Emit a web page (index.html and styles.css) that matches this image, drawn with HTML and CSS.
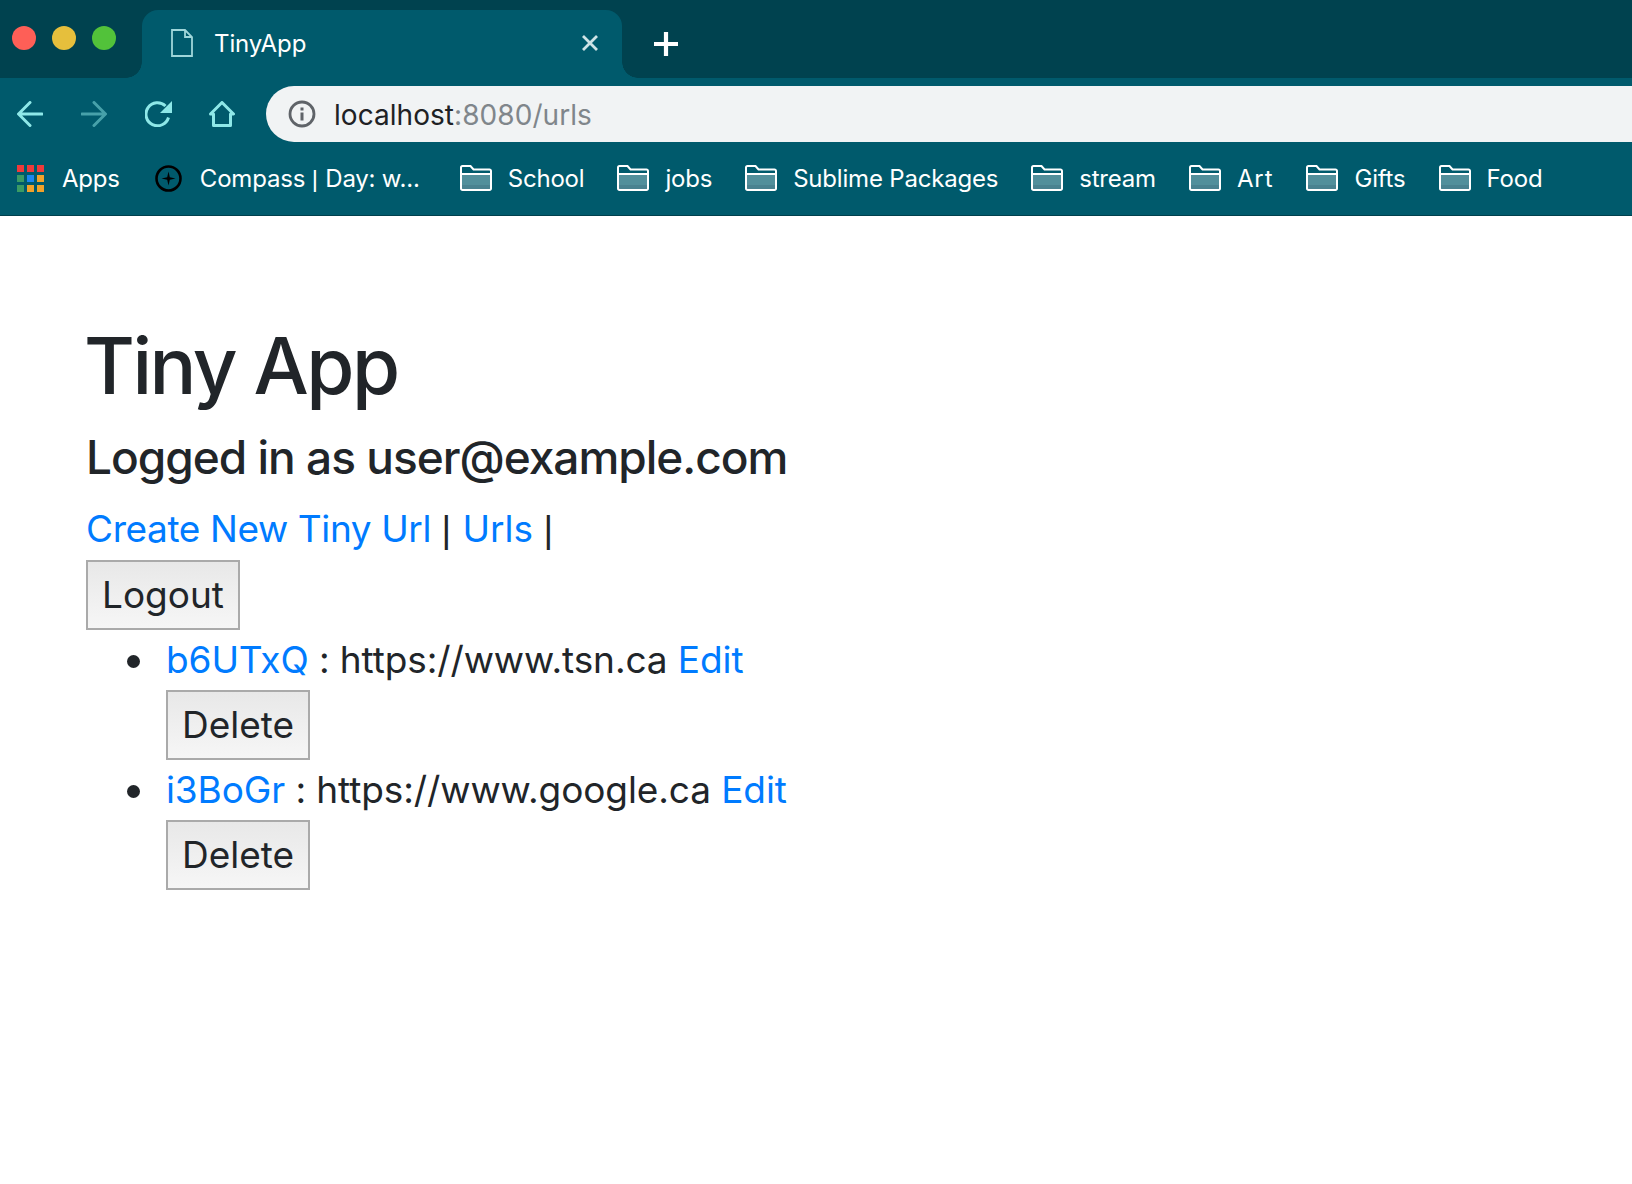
FILE: index.html
```html
<!DOCTYPE html>
<html lang="en">
<head>
  <meta charset="UTF-8">
  <title>TinyApp</title>
  <link rel="stylesheet" href="styles.css">
</head>
<body>
  <svg class="defs" width="0" height="0">
    <symbol id="folder" viewBox="0 0 32 26">
      <path d="M1 9h30v14.5a1.5 1.5 0 0 1-1.5 1.5h-27A1.5 1.5 0 0 1 1 23.5z" fill="#528f9b"/>
      <path d="M1 20h30v3.500a1.500 1.500 0 0 1-1.500 1.500h-27A1.500 1.500 0 0 1 1 23.500z" fill="#4a8290"/>
      <path d="M1 9V2.500A1.500 1.500 0 0 1 2.500 1h8l3 3.500h16A1.500 1.500 0 0 1 31 6v17.500a1.500 1.500 0 0 1-1.500 1.500h-27A1.500 1.500 0 0 1 1 23.500V9h30" fill="none" stroke="#fff" stroke-width="2"/>
    </symbol>
  </svg>

  <header class="browser">
    <div class="tabstrip">
      <div class="lights">
        <span class="light red"></span>
        <span class="light yellow"></span>
        <span class="light green"></span>
      </div>
      <div class="tab">
        <svg class="tab-icon" width="22" height="28" viewBox="0 0 22 28"><path d="M1 1h13l7 7v19H1zM14 1v7h7" fill="none" stroke="#9fd6da" stroke-width="1.800"/></svg>
        <span class="tab-title">TinyApp</span>
        <svg class="tab-close" width="18" height="18" viewBox="0 0 18 18"><path d="M2 2l14 14M16 2L2 16" stroke="#cfe3e6" stroke-width="2.800"/></svg>
      </div>
      <svg class="new-tab" width="26" height="26" viewBox="0 0 26 26"><path d="M13 1v24M1 13h24" stroke="#fff" stroke-width="4.200"/></svg>
    </div>

    <div class="toolbar">
      <svg class="nav-icon" width="26" height="26" viewBox="0 0 26 26"><path d="M25 13H2M13 1.500L1.500 13 13 24.500" fill="none" stroke="#8ee8e8" stroke-width="3" stroke-linecap="round"/></svg>
      <svg class="nav-icon dim" width="26" height="26" viewBox="0 0 26 26"><path d="M1 13h23M13 1.500L24.500 13 13 24.500" fill="none" stroke="#8ee8e8" stroke-width="3" stroke-linecap="round"/></svg>
      <svg class="nav-icon reload" width="27" height="26" viewBox="0 0 27 26"><path d="M23.500 16.500A11.500 11.500 0 1 1 20.500 5" fill="none" stroke="#8ee8e8" stroke-width="3"/><path d="M27 0v12H15z" fill="#8ee8e8"/></svg>
      <svg class="nav-icon" width="26" height="26" viewBox="0 0 26 26"><path d="M1.500 13L13 1.500 24.500 13h-3v11.500h-17V13z" fill="none" stroke="#8ee8e8" stroke-width="3" stroke-linejoin="round"/></svg>
      <div class="omnibox">
        <svg class="info" width="28" height="28" viewBox="0 0 28 28"><circle cx="14" cy="14" r="12" fill="none" stroke="#5f6368" stroke-width="2.800"/><path d="M14 12.500v8M14 7.500v3" stroke="#5f6368" stroke-width="3"/></svg>
        <span class="url">localhost<span class="url-rest">:8080/urls</span></span>
      </div>
    </div>

    <nav class="bookmarks">
      <a class="bookmark apps">
        <span class="apps-grid">
          <i class="r"></i><i class="r"></i><i class="r"></i>
          <i class="g"></i><i class="b"></i><i class="o"></i>
          <i class="g"></i><i class="o"></i><i class="o"></i>
        </span>
        Apps
      </a>
      <a class="bookmark compass">
        <svg width="27" height="27" viewBox="0 0 27 27"><circle cx="13.500" cy="13.500" r="12" fill="none" stroke="#000" stroke-width="2.600"/><path d="M13.500 6.500l1.300 5.700 5.700 1.300-5.700 1.300-1.300 5.700-1.300-5.700-5.700-1.300 5.700-1.300z" fill="#000"/></svg>
        <span>Compass <span class="sep">|</span> Day: w...</span>
      </a>
      <a class="bookmark"><svg class="folder"><use href="#folder"/></svg>School</a>
      <a class="bookmark"><svg class="folder"><use href="#folder"/></svg>jobs</a>
      <a class="bookmark"><svg class="folder"><use href="#folder"/></svg>Sublime Packages</a>
      <a class="bookmark"><svg class="folder"><use href="#folder"/></svg>stream</a>
      <a class="bookmark wide"><svg class="folder"><use href="#folder"/></svg>Art</a>
      <a class="bookmark"><svg class="folder"><use href="#folder"/></svg>Gifts</a>
      <a class="bookmark"><svg class="folder"><use href="#folder"/></svg>Food</a>
    </nav>
  </header>

  <main class="page">
    <h1>Tiny App</h1>
    <h4>Logged in as user@example.com</h4>
    <div class="links">
      <a class="create" href="#">Create New Tiny Url</a> <span class="sep">|</span> <a href="#">Urls</a> <span class="sep">|</span>
    </div>
    <form class="inline-form"><button type="button">Logout</button></form>
    <ul class="url-list">
      <li>
        <a href="#">b6UTxQ</a> : https://www.tsn.ca <a href="#">Edit</a>
        <form class="inline-form"><button type="button">Delete</button></form>
      </li>
      <li>
        <a href="#">i3BoGr</a> : https://www.google.ca <a href="#">Edit</a>
        <form class="inline-form"><button type="button">Delete</button></form>
      </li>
    </ul>
  </main>
</body>
</html>
```

FILE: styles.css
```css
body {
  margin: 0;
  font-family: Inter, "Liberation Sans", sans-serif;
  color: #212529;
  background: #fff;
}

.defs {
  position: absolute;
}

/* Browser chrome */
.browser {
  background: #005a6c;
  color: #fff;
  border-bottom: 1px solid #00404d;
}

.tabstrip {
  display: flex;
  align-items: flex-end;
  height: 78px;
  background: #00424f;
}

.lights {
  display: flex;
  gap: 16px;
  width: 142px;
  height: 68px;
  padding: 16px 0 0 12px;
  box-sizing: border-box;
}

.light {
  width: 24px;
  height: 24px;
  border-radius: 50%;
}
.red { background: #fe5f57; }
.yellow { background: #e6bf3c; }
.green { background: #52c23a; }

.tab {
  position: relative;
  display: flex;
  align-items: center;
  width: 480px;
  height: 68px;
  box-sizing: border-box;
  padding: 0 23px 2px 29px;
  background: #005a6c;
  border-radius: 16px 16px 0 0;
}

/* flared bottom corners of the tab */
.tab::before,
.tab::after {
  content: "";
  position: absolute;
  bottom: 0;
  width: 16px;
  height: 16px;
}
.tab::before {
  left: -16px;
  background: radial-gradient(circle at 0 0, #00424f 15.500px, #005a6c 16px);
}
.tab::after {
  right: -16px;
  background: radial-gradient(circle at 100% 0, #00424f 15.500px, #005a6c 16px);
}

.tab-title {
  flex: 1;
  margin-left: 21px;
  font-size: 24px;
  letter-spacing: -0.1px;
}

.new-tab {
  margin: 0 0 21px 31px;
}

.toolbar {
  display: flex;
  align-items: center;
  height: 72px;
  padding: 0 0 0 17px;
}

.nav-icon {
  flex: none;
  margin-right: 38px;
}
.reload {
  margin-right: 37px;
}
.dim { opacity: 0.5; }

.omnibox {
  flex: 1;
  display: flex;
  align-items: center;
  height: 56px;
  margin-left: -7px;
  padding-left: 22px;
  background: #f1f3f4;
  border-radius: 28px 0 0 28px;
}

.url {
  margin: 1px 0 0 18px;
  font-size: 28px;
  letter-spacing: 0.05px;
  color: #202124;
}
.url-rest { color: #80868b; }

.bookmarks {
  display: flex;
  align-items: center;
  gap: 33px;
  height: 65px;
  padding: 0 0 9px 17px;
  box-sizing: border-box;
  font-size: 24px;
  letter-spacing: -0.2px;
}

.bookmark {
  display: flex;
  align-items: center;
  gap: 16px;
  white-space: nowrap;
  color: #fff;
}

.wide {
  letter-spacing: 0.9px;
}

.folder {
  width: 32px;
  height: 26px;
}

.compass {
  gap: 18px;
  margin: 0 7px 0 2px;
}
.apps {
  gap: 18px;
}

.apps-grid {
  display: grid;
  grid-template-columns: repeat(3, 7px);
  gap: 3px;
}
.apps-grid i {
  height: 7px;
}
.apps-grid .r { background: #f03a3a; }
.apps-grid .g { background: #3a9b64; }
.apps-grid .b { background: #1a86f0; }
.apps-grid .o { background: #f2a22a; }

/* Page content */
.page {
  padding: 100px 86px 0;
  font-size: 37px;
  line-height: 60px;
}

h1 {
  margin: 0 0 11px -2px;
  font-size: 78px;
  font-weight: 500;
  line-height: 100px;
  letter-spacing: -2.500px;
}

h4 {
  margin: 0 0 12px;
  font-size: 46px;
  font-weight: 500;
  line-height: 60px;
  letter-spacing: -1px;
}

a {
  color: #007bff;
  text-decoration: none;
}

.create {
  letter-spacing: -0.4px;
}

.sep {
  font-family: "Liberation Sans", sans-serif;
  margin-right: 1px;
}

.inline-form {
  margin: 0;
}

button {
  display: block;
  height: 70px;
  padding: 0 14px;
  font: inherit;
  color: #212529;
  background: linear-gradient(#e8e8e8, #f6f6f6);
  border: 2px solid #aaa;
}

.url-list {
  margin: 0;
  padding-left: 80px;
  list-style: none;
  letter-spacing: -0.1px;
}

.url-list li {
  position: relative;
}

/* bullet sits further from the text than the default marker */
.url-list li::before {
  content: "";
  position: absolute;
  left: -39px;
  top: 25px;
  width: 13px;
  height: 13px;
  border-radius: 50%;
  background: #212529;
}
```
